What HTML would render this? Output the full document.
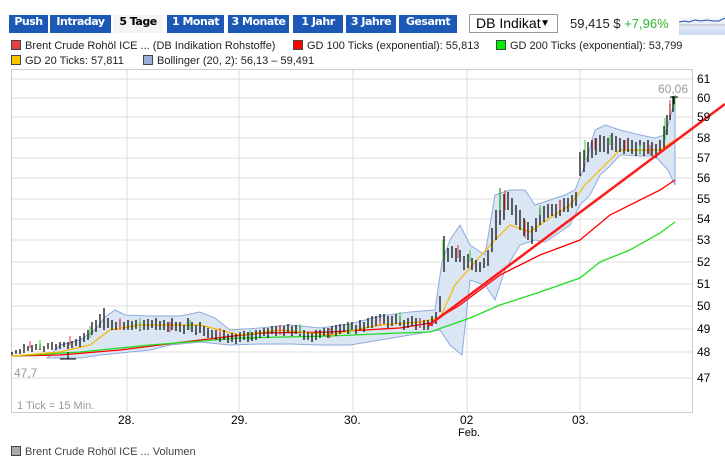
<!DOCTYPE html>
<html><head><meta charset="utf-8"><style>
body{margin:0;width:725px;height:453px;overflow:hidden;background:#fff;font-family:"Liberation Sans",sans-serif;position:relative}
.t{position:absolute;top:15px;height:18px;line-height:18px;background:#1c58b5;color:#fff;font:bold 11px "DejaVu Sans",sans-serif;text-align:center;letter-spacing:-0.5px}
.t.a{background:#f4f4f4;color:#000}
.l{position:absolute;font-size:11px;color:#222;white-space:nowrap}
.sq{display:inline-block;width:8px;height:8px;border:1px solid #444;margin-right:4px;vertical-align:-1px}
.ax{position:absolute;font-size:12px;color:#000}
</style></head><body>
<div class="t" style="left:9px;width:39px">Push</div>
<div class="t" style="left:50px;width:61px">Intraday</div>
<div class="t a" style="left:113px;width:50px">5 Tage</div>
<div class="t" style="left:167px;width:57px">1 Monat</div>
<div class="t" style="left:228px;width:61px">3 Monate</div>
<div class="t" style="left:293px;width:50px">1 Jahr</div>
<div class="t" style="left:346px;width:50px">3 Jahre</div>
<div class="t" style="left:399px;width:58px">Gesamt</div>
<div style="position:absolute;left:469px;top:14px;width:89px;height:19px;border:1px solid #999;box-sizing:border-box;font-size:14px;line-height:17px;padding-left:6px">DB Indikat<span style="position:absolute;right:7px;font-size:10px">▼</span></div>
<div class="l" style="left:570px;top:16px;font-size:13px">59,415 $ <span style="color:#2db52d">+7,96%</span></div>
<div style="position:absolute;left:679px;top:15px;width:46px;height:20px;background:linear-gradient(#fff,#c8d8f0)"><svg width="46" height="20"><polyline points="0,7 6,6 10,7 16,5 22,6 28,5 34,6 40,6 46,3" fill="none" stroke="#2050b0" stroke-width="1"/><line x1="0" y1="10" x2="46" y2="10" stroke="#bbb"/></svg></div>
<div class="l" style="left:11px;top:40px"><span class="sq" style="background:#e84040"></span>Brent Crude Rohöl ICE ... (DB Indikation Rohstoffe)</div>
<div class="l" style="left:293px;top:40px"><span class="sq" style="background:#f00"></span>GD 100 Ticks (exponential): 55,813</div>
<div class="l" style="left:496px;top:40px"><span class="sq" style="background:#0e0"></span>GD 200 Ticks (exponential): 53,799</div>
<div class="l" style="left:11px;top:55px"><span class="sq" style="background:#f8c800"></span>GD 20 Ticks: 57,811</div>
<div class="l" style="left:143px;top:55px"><span class="sq" style="background:#9ab0d8"></span>Bollinger (20, 2): 56,13 – 59,491</div>
<svg style="position:absolute;left:0;top:0" width="725" height="453">
<rect x="11.5" y="69.5" width="681" height="343" fill="none" stroke="#ccc"/>
<g stroke="#ddd">
<line x1="12" x2="692" y1="79" y2="79"/><line x1="12" x2="692" y1="98" y2="98"/><line x1="12" x2="692" y1="117" y2="117"/><line x1="12" x2="692" y1="138" y2="138"/><line x1="12" x2="692" y1="158" y2="158"/><line x1="12" x2="692" y1="178" y2="178"/><line x1="12" x2="692" y1="199" y2="199"/><line x1="12" x2="692" y1="219" y2="219"/><line x1="12" x2="692" y1="240" y2="240"/><line x1="12" x2="692" y1="262" y2="262"/><line x1="12" x2="692" y1="284" y2="284"/><line x1="12" x2="692" y1="306" y2="306"/><line x1="12" x2="692" y1="329" y2="329"/><line x1="12" x2="692" y1="352" y2="352"/><line x1="12" x2="692" y1="378" y2="378"/>
<line x1="127" x2="127" y1="70" y2="412"/><line x1="239" x2="239" y1="70" y2="412"/><line x1="353" x2="353" y1="70" y2="412"/><line x1="467" x2="467" y1="70" y2="412"/><line x1="580" x2="580" y1="70" y2="412"/>
</g>
<polygon fill="#dbe6f5" stroke="#8eaadb" stroke-width="1" points="47,358 60,345 80,340 95,330 105,317 115,310 125,315 150,316 180,316 200,312 215,318 230,330 260,328 290,325 320,328 350,324 380,316 410,312 435,310 442,262 450,240 460,225 470,245 485,255 495,195 510,190 525,190 535,205 550,200 565,195 575,190 585,165 595,130 605,125 620,130 640,135 655,138 665,135 670,118 675,100 675,185 668,170 655,156 640,156 620,155 608,168 600,175 590,195 580,205 570,225 560,232 545,242 535,240 520,245 505,270 495,300 485,285 470,280 462,355 450,345 440,330 410,335 380,340 350,345 320,345 290,344 260,344 230,345 200,342 170,345 150,350 130,352 100,355 80,358"/>
<polyline fill="none" stroke="#ff0000" stroke-width="1.3" points="12,356 60,355 120,350 200,340 260,333 330,332 400,328 430,323 460,305 500,275 540,255 580,240 610,215 640,200 660,190 675,180"/>
<polyline fill="none" stroke="#22dd22" stroke-width="1.3" points="12,356 80,352 150,345 240,338 330,336 400,333 430,332 470,318 500,305 540,292 580,278 600,262 630,250 660,233 675,222"/>
<polyline fill="none" stroke="#f5b800" stroke-width="1.2" points="12,356 60,352 90,345 110,330 140,325 200,325 240,335 280,330 330,335 380,325 420,322 440,318 455,285 475,262 495,240 510,225 530,232 550,218 570,205 585,185 600,170 620,150 640,150 660,150 675,140"/>
<g stroke="#111" stroke-width="1.3"><path d="M12 355V352M16 354V350M20 354V349M24 353V344M28 351V346M32 352V345M36 350V344M40 350V344M44 352V346M48 349V343M52 350V342M56 350V344M60 349V342M64 347V342M68 349V342M72 348V341M76 346V339M80 347V336M84 342V333M88 340V330M92 335V322M96 332V320M100 328V314M104 330V308M108 328V318M112 330V320M116 330V322M120 328V320M124 330V322M128 330V320M132 330V321M136 329V320M140 331V322M144 330V320M148 330V319M152 328V320M156 330V318M160 330V321M164 330V320M168 332V322M172 330V318M176 331V322M180 332V322M184 334V325M188 330V318M192 332V322M196 335V325M200 333V322M204 336V326M208 338V328M212 338V330M216 340V330M220 342V332M224 340V330M228 343V334M232 342V333M236 344V334M240 342V332M244 340V331M248 342V332M252 341V332M256 340V330M260 338V330M264 336V328M268 338V328M272 334V326M276 336V326M280 334V325M284 336V326M288 333V324M292 336V326M296 334V325M300 336V326M304 340V330M308 340V332M312 342V333M316 340V330M320 338V330M324 336V328M328 338V328M332 334V326M336 336V325M340 334V324M344 332V324M348 334V322M352 330V322M356 334V325M360 330V320M364 332V322M368 328V318M372 328V316M376 326V316M380 322V314M384 324V314M388 328V316M392 326V316M396 324V314M400 326V316M404 330V320M408 328V318M412 326V316M416 330V318M420 328V318M424 330V320M428 330V320M432 326V316M436 324V312M440 312V296M444 272V236M448 262V248M452 258V246M456 262V248M460 262V250M464 270V256M468 268V254M472 270V258M476 272V260M480 272V262M484 268V258M488 266V250M492 252V228M496 240V210M500 225V188M504 220V194M508 210V192M512 215V198M516 225V205M520 230V210M524 236V218M528 240V222M532 244V226M536 232V218M540 225V208M544 222V206M548 218V204M552 216V204M556 218V204M560 216V200M564 212V198M568 212V198M572 208V195M576 206V192M580 176V152M584 172V150M588 162V142M592 158V140M596 155V138M600 152V135M604 152V136M608 154V138M612 150V133M616 152V136M620 152V138M624 154V140M628 152V138M632 154V140M636 156V142M640 154V140M644 156V142M648 154V140M652 156V142M656 158V144M660 154V140M664 148V126M667 135V115M670 120V104M673 112V96"/></g>
<g stroke="#e33" stroke-width="1"><path d="M30 348V341M70 345V336M120 330V318M170 332V322M220 338V328M280 335V325M330 338V328M380 326V318M420 328V318M458 258V245M505 210V190M525 238V220M560 210V200M595 150V138M625 150V140M650 155V145M670 115V100"/></g>
<g stroke="#3c3" stroke-width="1"><path d="M40 349V340M90 338V326M140 330V318M190 330V320M250 340V330M300 334V324M350 334V324M400 322V312M443 260V240M470 262V250M500 210V188M540 215V205M585 160V140M610 145V135M640 155V145M665 140V118M675 110V95"/></g>
<path d="M670 97H678M674 97V104M60 359H76M68 352V359" stroke="#000"/>
<line x1="428" y1="326" x2="725" y2="104" stroke="#ff1a1a" stroke-width="2.5"/>
</svg>
<div class="ax" style="left:658px;top:82px;color:#999">60,06</div>
<div class="ax" style="left:14px;top:366px;color:#999">47,7</div>
<div class="ax" style="left:17px;top:400px;color:#999;font-size:11px">1 Tick = 15 Min.</div>
<div class="ax" style="left:697px;top:72px">61</div><div class="ax" style="left:697px;top:91px">60</div><div class="ax" style="left:697px;top:110px">59</div><div class="ax" style="left:697px;top:131px">58</div><div class="ax" style="left:697px;top:151px">57</div><div class="ax" style="left:697px;top:171px">56</div><div class="ax" style="left:697px;top:192px">55</div><div class="ax" style="left:697px;top:212px">54</div><div class="ax" style="left:697px;top:233px">53</div><div class="ax" style="left:697px;top:255px">52</div><div class="ax" style="left:697px;top:277px">51</div><div class="ax" style="left:697px;top:299px">50</div><div class="ax" style="left:697px;top:322px">49</div><div class="ax" style="left:697px;top:345px">48</div><div class="ax" style="left:697px;top:371px">47</div>
<div class="ax" style="left:118px;top:413px">28.</div><div class="ax" style="left:231px;top:413px">29.</div><div class="ax" style="left:344px;top:413px">30.</div><div class="ax" style="left:460px;top:413px">02</div><div class="ax" style="left:458px;top:427px;font-size:11px">Feb.</div><div class="ax" style="left:572px;top:413px">03.</div>
<div class="l" style="left:11px;top:446px;color:#444"><span class="sq" style="background:#aaa"></span>Brent Crude Rohöl ICE ... Volumen</div>
</body></html>
